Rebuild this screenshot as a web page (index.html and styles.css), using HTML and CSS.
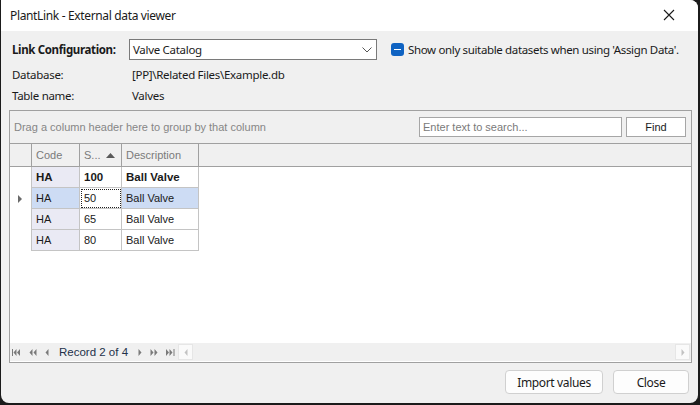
FILE: index.html
```html
<!DOCTYPE html>
<html>
<head>
<meta charset="utf-8">
<link rel="stylesheet" href="styles.css">
</head>
<body>
<div class="window">
  <div class="titlebar">
    <span class="title">PlantLink - External data viewer</span>
    <svg class="close-x" width="12" height="12" viewBox="0 0 12 12"><path d="M1 1L11 11M11 1L1 11" stroke="#1a1a1a" stroke-width="1.1"/></svg>
  </div>
  <div class="content">
    <div class="form-row first">
      <span class="label bold">Link Configuration:</span>
      <div class="combo">
        <span>Valve Catalog</span>
        <svg width="10" height="6" viewBox="0 0 10 6"><path d="M0.5 0.5L5 5L9.5 0.5" fill="none" stroke="#555" stroke-width="1"/></svg>
      </div>
      <div class="check">
        <span class="checkbox"><span class="dash"></span></span>
        <span>Show only suitable datasets when using 'Assign Data'.</span>
      </div>
    </div>
    <div class="form-row">
      <span class="label">Database:</span>
      <span class="value">[PP]\Related Files\Example.db</span>
    </div>
    <div class="form-row">
      <span class="label">Table name:</span>
      <span class="value">Valves</span>
    </div>

    <div class="grid-panel">
      <div class="group-panel">
        <span class="group-hint">Drag a column header here to group by that column</span>
        <div class="search">
          <input class="search-box" placeholder="Enter text to search...">
          <button class="find">Find</button>
        </div>
      </div>
      <div class="header-row">
        <div class="hcell ind"></div>
        <div class="hcell c1">Code</div>
        <div class="hcell c2">S... <svg class="sort" width="9" height="5" viewBox="0 0 9 5"><path d="M0 5L4.5 0L9 5Z" fill="#5a5a5a"/></svg></div>
        <div class="hcell c3">Description</div>
      </div>
      <div class="data">
        <div class="row group">
          <div class="ind"></div>
          <div class="cell c1 code">HA</div>
          <div class="cell c2">100</div>
          <div class="cell c3">Ball Valve</div>
        </div>
        <div class="row selected">
          <div class="ind"><svg width="4" height="8" viewBox="0 0 4 8"><path d="M0 0L4 4L0 8Z" fill="#6a6a6a"/></svg></div>
          <div class="cell c1 code">HA</div>
          <div class="cell c2 focus">50</div>
          <div class="cell c3">Ball Valve</div>
        </div>
        <div class="row">
          <div class="ind"></div>
          <div class="cell c1 code">HA</div>
          <div class="cell c2">65</div>
          <div class="cell c3">Ball Valve</div>
        </div>
        <div class="row">
          <div class="ind"></div>
          <div class="cell c1 code">HA</div>
          <div class="cell c2">80</div>
          <div class="cell c3">Ball Valve</div>
        </div>
      </div>
      <div class="footer">
        <div class="nav">
          <svg width="9" height="7" viewBox="0 0 9 7"><path d="M0.5 0V7" stroke="#7a7a7a"/><path d="M4.5 0L1.5 3.5L4.5 7Z M8 0L5 3.5L8 7Z" fill="#7a7a7a"/></svg>
          <svg width="8" height="7" viewBox="0 0 8 7"><path d="M3.5 0L0.5 3.5L3.5 7Z M7.5 0L4.5 3.5L7.5 7Z" fill="#7a7a7a"/></svg>
          <svg width="4" height="7" viewBox="0 0 4 7"><path d="M3.5 0L0.5 3.5L3.5 7Z" fill="#7a7a7a"/></svg>
          <span class="record">Record 2 of 4</span>
          <svg width="4" height="7" viewBox="0 0 4 7"><path d="M0.5 0L3.5 3.5L0.5 7Z" fill="#7a7a7a"/></svg>
          <svg width="8" height="7" viewBox="0 0 8 7"><path d="M0.5 0L3.5 3.5L0.5 7Z M4.5 0L7.5 3.5L4.5 7Z" fill="#7a7a7a"/></svg>
          <svg width="9" height="7" viewBox="0 0 9 7"><path d="M0 0L3 3.5L0 7Z M3.5 0L6.5 3.5L3.5 7Z" fill="#7a7a7a"/><path d="M8 0V7" stroke="#7a7a7a"/></svg>
        </div>
        <div class="hscroll">
          <div class="arrow"><svg width="4" height="7" viewBox="0 0 4 7"><path d="M3.5 0L0.5 3.5L3.5 7Z" fill="#c2c2c2"/></svg></div>
          <div class="track"></div>
          <div class="arrow"><svg width="4" height="7" viewBox="0 0 4 7"><path d="M0.5 0L3.5 3.5L0.5 7Z" fill="#c2c2c2"/></svg></div>
        </div>
      </div>
    </div>

    <div class="buttons">
      <button class="btn import">Import values</button>
      <button class="btn close">Close</button>
    </div>
  </div>
</div>
</body>
</html>
```

FILE: styles.css
```css
* { box-sizing: border-box; }
html, body { margin: 0; padding: 0; }
body {
  background: #1b1b1b;
  width: 700px;
  height: 405px;
  overflow: hidden;
  font-family: "Liberation Sans", Arial, sans-serif;
}
.window {
  width: 697px;
  height: 403px;
  margin-left: 1px;
  background: #f0f0f0;
  border-radius: 0 8px 8px 8px;
  overflow: hidden;
  display: flex;
  flex-direction: column;
  font-family: "Noto Sans", sans-serif;
  font-size: 11.5px;
  color: #1a1a1a;
}
.titlebar {
  height: 31px;
  background: #ffffff;
  display: flex;
  align-items: center;
  justify-content: space-between;
  padding: 0 23px 1px 9px;
  flex: none;
  font-size: 12px;
}
.title { letter-spacing: -0.35px; }
.content {
  flex: 1;
  padding: 8px 5px 0 8px;
  display: flex;
  flex-direction: column;
}
.form-row {
  display: flex;
  align-items: center;
  height: 21px;
}
.form-row.first { height: 21px; margin-bottom: 4px; }
.label {
  width: 120px;
  padding-left: 3px;
  letter-spacing: -0.3px;
}
.label.bold { font-weight: bold; letter-spacing: -0.35px; }
.value { padding-left: 3px; letter-spacing: -0.3px; }
.combo {
  width: 248px;
  height: 21px;
  background: #fff;
  border: 1px solid #7a7a7a;
  display: flex;
  align-items: center;
  justify-content: space-between;
  padding: 0 4px 0 3px;
  letter-spacing: -0.3px;
}
.check {
  display: flex;
  align-items: center;
  margin-left: 14px;
  gap: 4px;
  letter-spacing: -0.35px;
}
.checkbox {
  width: 13px;
  height: 13px;
  border-radius: 3px;
  background: #0f63c2;
  display: flex;
  align-items: center;
  justify-content: center;
}
.dash { width: 7px; height: 1.5px; background: #fff; }

.grid-panel {
  margin-top: 4px;
  width: 683px;
  height: 253px;
  border: 1px solid #a0a0a0;
  background: #fff;
  display: flex;
  flex-direction: column;
  font-family: "Liberation Sans", Arial, sans-serif;
  font-size: 11px;
}
.group-panel {
  height: 33px;
  background: #f0f0f0;
  border-bottom: 1px solid #a0a0a0;
  display: flex;
  align-items: center;
  justify-content: space-between;
  padding: 0 5px 1px 4px;
  flex: none;
}
.group-hint { color: #868686; }
.search { display: flex; gap: 4px; }
.search-box {
  width: 203px;
  height: 20px;
  border: 1px solid #a6a6a6;
  background: #fff;
  font-family: "Liberation Sans", Arial, sans-serif;
  font-size: 11px;
  padding: 0 3px;
  margin: 0;
  outline: none;
}
.search-box::placeholder { color: #7a7a7a; }
.find {
  width: 60px;
  height: 20px;
  border: 1px solid #a6a6a6;
  background: #fff;
  font-family: "Liberation Sans", Arial, sans-serif;
  font-size: 11px;
  color: #1a1a1a;
  margin: 0;
  padding: 0;
}
.header-row {
  display: flex;
  height: 23px;
  background: #f0f0f0;
  border-bottom: 1px solid #a0a0a0;
  flex: none;
}
.hcell {
  height: 22px;
  display: flex;
  align-items: center;
  padding-left: 4px;
  color: #7a7a7a;
  border-right: 1px solid #a0a0a0;
}
.hcell.ind { width: 22px; }
.c1 { width: 48px; }
.c2 { width: 42px; }
.c3 { width: 77px; }
.sort { margin-left: 5px; }
.data { flex: 1; }
.row {
  display: flex;
  height: 21px;
}
.row .ind {
  width: 22px;
  flex: none;
  display: flex;
  align-items: center;
  padding-left: 8px;
  border-right: 1px solid #c4c4c4;
}
.cell {
  height: 21px;
  display: flex;
  align-items: center;
  padding-left: 4px;
  border-right: 1px solid #c4c4c4;
  border-bottom: 1px solid #c4c4c4;
  color: #1a1a1a;
}
.cell.code { background: #eaeaf4; }
.row.group .cell { font-weight: bold; font-size: 11.5px; }
.row.selected .cell { background: #cddcf4; }
.row.selected .cell.focus {
  background: #fff;
  outline: 1px dotted #222;
  outline-offset: -2px;
}
.footer {
  height: 18px;
  display: flex;
  align-items: center;
  background: #f0f0f0;
  flex: none;
  margin-bottom: 1px;
}
.nav {
  display: flex;
  align-items: center;
  gap: 8px;
  padding-left: 2px;
  width: 168px;
  flex: none;
}
.record { color: #23304a; font-size: 11.5px; margin: 0 2px 0 2px; }
.hscroll {
  flex: 1;
  height: 16px;
  display: flex;
  margin-right: 1px;
}
.hscroll .arrow {
  width: 15px;
  height: 16px;
  background: #fafafa;
  border: 1px solid #e6e6e6;
  display: flex;
  align-items: center;
  justify-content: center;
}
.hscroll .track { flex: 1; background: #f0f0f0; }
.buttons {
  display: flex;
  justify-content: flex-end;
  gap: 10px;
  margin-top: 7px;
  padding-right: 4px;
}
.btn {
  height: 24px;
  border: 1px solid #d0d0d0;
  border-radius: 4px;
  background: #fdfdfd;
  font-family: "Noto Sans", sans-serif;
  font-size: 12px;
  letter-spacing: -0.35px;
  color: #1a1a1a;
  padding: 0;
}
.btn.import { width: 98px; }
.btn.close { width: 76px; }
```
